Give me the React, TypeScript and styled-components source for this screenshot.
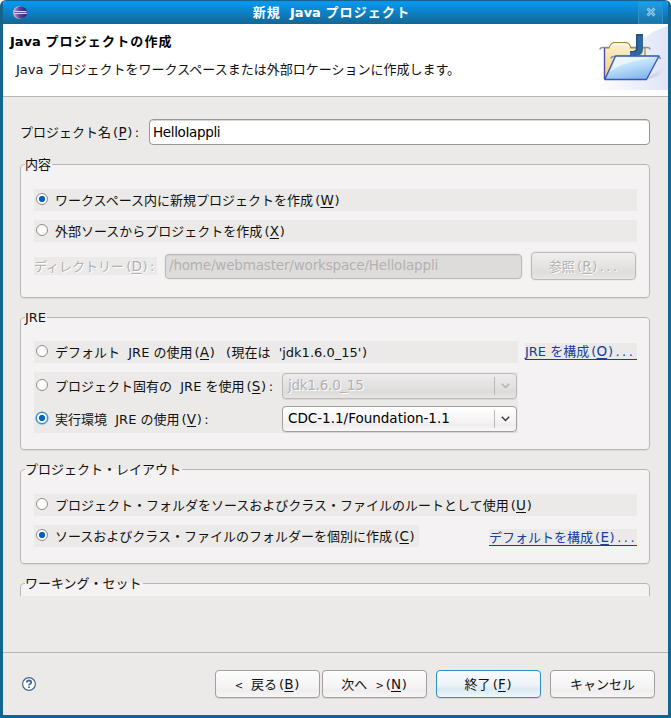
import React from 'react';
import styled, { createGlobalStyle, css } from 'styled-components';

const FACE = '#ebeae8';
const PANEL = '#f4f2f3';
const FRAME = '#15648f';
const LINE = '#b9b7b6';

const GlobalStyle = createGlobalStyle`
  * { box-sizing: border-box; }
  html, body { margin: 0; padding: 0; background: #fff; }
  body {
    font-family: "DejaVu Sans", "Noto Sans CJK JP", sans-serif;
    font-size: 13px;
    line-height: 18px;
    color: #111;
    overflow: hidden;
  }
`;

const Window = styled.div`
  width: 671px;
  height: 718px;
  display: flex;
  flex-direction: column;
  background: ${FACE};
  border: 3px solid ${FRAME};
  border-top: 0;
  border-radius: 6px 6px 0 0;
  overflow: hidden;
`;

const TitleBar = styled.header`
  flex: none;
  height: 24px;
  margin: 0 -3px;
  display: grid;
  grid-template-columns: 26px 1fr 40px;
  align-items: center;
  background: linear-gradient(#0a96e8 1px, #0794e8 3px, #15648f 24px);
  border-top: 1px solid #15648f;
  padding-left: 12px;
`;

const Title = styled.h1`
  margin: 0;
  font-size: 13px;
  line-height: 22px;
  text-align: center;
  font-weight: 700;
  color: #fff;
  padding-right: 6px;
`;

const CloseButton = styled.button`
  width: 25px;
  height: 22px;
  margin-left: 7px;
  padding: 0;
  border: 1px solid #2493d0;
  border-top: 0;
  border-bottom-color: #2080b5;
  background: linear-gradient(#1e9fe8, #1c74a5);
  display: grid;
  place-items: center;
`;

const Banner = styled.section`
  flex: none;
  height: 73px;
  display: flex;
  justify-content: space-between;
  background: #fff;
  border-bottom: 1px solid ${LINE};
`;

const BannerText = styled.div`
  padding: 9px 0 0 7px;
`;

const BannerTitle = styled.h2`
  margin: 0;
  font-size: 13px;
  line-height: 18px;
  font-weight: 700;
  color: #000;
`;

const BannerNote = styled.p`
  margin: 10px 0 0 6px;
`;

const Body = styled.main`
  flex: none;
  height: 499px;
  padding: 22px 18px 0 17px;
  overflow: hidden;
`;

const NameRow = styled.label`
  display: flex;
  align-items: center;
  height: 26px;
`;

const NameLabel = styled.span`
  width: 129px;
  padding-top: 2px;
`;

const Field = styled.input<{ $h: number }>`
  flex: 1;
  min-width: 0;
  height: ${p => p.$h}px;
  padding: 0 3px 1px 3px;
  border: 1px solid #9c9494;
  border-radius: 4px;
  background: #fff;
  box-shadow: inset 0 1px 0 #d8d6d6;
  font: inherit;
  font-size: 13.5px;
  letter-spacing: -0.35px;
  color: #000;
  outline: 0;
  &:disabled {
    background: #dedcdb;
    border-color: #bdbbba;
    color: #b3b1b0;
    letter-spacing: -0.17px;
    padding-bottom: 3px;
    box-shadow: inset 0 1px 0 #d2d0cf, 0 0 0 1px ${FACE};
  }
`;

const Group = styled.fieldset<{ $h: number; $top: number }>`
  min-width: 0;
  height: ${p => p.$h}px;
  margin: ${p => p.$top}px 0 0;
  padding: 0 12px 0 13px;
  border: 1px solid ${LINE};
  border-radius: 4px;
  background: ${PANEL};
  box-shadow: 0 1px 0 #dddbd9;
`;

const Legend = styled.legend`
  height: 19px;
  line-height: 19px;
  margin-left: -9px;
  padding: 0 1px 0 0;
`;

const ClippedGroup = styled.div`
  height: 23px;
  margin-top: 10px;
  overflow: hidden;
`;

const Rows = styled.div<{ $pad: number }>`
  padding-top: ${p => p.$pad}px;
  display: flex;
  flex-direction: column;
  gap: 9px;
`;

const Line = styled.div`
  display: flex;
  justify-content: space-between;
  align-items: flex-start;
`;

const OptionLabel = styled.label<{ $w: number }>`
  width: ${p => p.$w}px;
  height: 22px;
  padding: 2px 0 0 2px;
  display: flex;
  align-items: center;
  gap: 7px;
  white-space: pre;
  background: ${FACE};
`;

const Dot = styled.span<{ $on?: boolean; $focus?: boolean }>`
  flex: none;
  width: 12px;
  height: 12px;
  margin-top: -4px;
  border-radius: 50%;
  border: 1px solid ${p => (p.$focus ? '#1c7fc0' : '#928b8b')};
  background: ${p => (p.$on ? 'radial-gradient(circle, #0560c4 2.7px, #fff 3.6px)' : '#fff')};
  ${p => p.$focus && css`box-shadow: 0 0 0 0.6px #4a9fd2;`}
`;

const Text = styled.span`
  white-space: pre;
`;

const BoldKana = styled.span`
  letter-spacing: 1.15px;
`;

const Accel = styled.span`
  font-size: 13.5px;
  line-height: 1;
  text-decoration: underline;
  text-underline-offset: 2px;
  text-decoration-thickness: 1px;
`;

const OpenBracket = styled.span`
  padding: 0 0.2px 0 2.1px;
`;

const CloseBracket = styled.span`
  padding: 0 0.9px 0 0.7px;
`;

const Wide = styled.span`
  letter-spacing: 2.5px;
  padding-left: 1.6px;
  margin-right: -1.6px;
`;

const Angle = styled.span`
  display: inline-block;
  width: 8px;
  font-size: 10px;
  line-height: 1;
`;

const DirLabel = styled.span`
  width: 123px;
  height: 18px;
  margin-right: -1px;
  background: ${FACE};
  color: #b3b1b0;
  line-height: 19px;
  text-shadow: 1px 1px 0 #fff;
`;

const DirRow = styled.div`
  display: flex;
  align-items: center;
  gap: 9px;
  height: 28px;
  margin-top: 1px;
  padding-right: 1px;
`;

const Button = styled.button<{ $primary?: boolean }>`
  flex: none;
  width: 105px;
  height: 28px;
  padding: 1px 0 0;
  font: inherit;
  white-space: pre;
  color: #111;
  border: 1px solid ${p => (p.$primary ? '#2d8fc4' : '#a39d9d')};
  border-radius: 4px;
  background: ${p => (p.$primary
    ? 'linear-gradient(#f8fbfd, #edf3f7 55%, #dce9f0 70%, #eef8fd)'
    : 'linear-gradient(#fdfdfd, #f5f3f4 60%, #efedee 75%, #f7f5f6)')};
  box-shadow: 0 1px 0 #d8d6d5, inset 0 1px 0 #fff;
  &:disabled {
    color: #b3b1b0;
    text-shadow: 1px 1px 0 #fff;
    border-color: #bdbbba;
    background: linear-gradient(#f0eeee, #e4e2e1 55%, #dfdddc 75%, #e9e7e6);
    box-shadow: 0 0 0 1px ${FACE};
  }
`;

const RuntimeBlock = styled.div`
  width: 484px;
  height: 61px;
  display: grid;
  grid-template-columns: 248px 235px;
  grid-template-rows: 26px 26px;
  row-gap: 7px;
  padding-top: 1px;
  align-items: center;
  background: ${FACE};
`;

const Combo = styled.div<{ $off?: boolean }>`
  height: 26px;
  display: flex;
  align-items: center;
  justify-content: space-between;
  padding: 0 6px 2px 5px;
  font-size: 13.5px;
  border: 1px solid ${p => (p.$off ? '#bdbbba' : '#a39d9d')};
  border-radius: 4px;
  color: ${p => (p.$off ? '#b3b1b0' : '#000')};
  ${p => p.$off && css`text-shadow: 1px 1px 0 #fff; letter-spacing: -0.25px;`}
  background: ${p => (p.$off
    ? 'linear-gradient(#edebeb, #e2e0df 60%, #dddbda 75%, #e8e6e5)'
    : 'linear-gradient(#fff, #f5f3f4 60%, #efedee 75%, #faf9f9)')};
  box-shadow: 0 1px 0 #d8d6d5;
`;

const ComboArrow = styled.span<{ $off?: boolean }>`
  height: 18px;
  margin-top: 2px;
  padding-left: 6px;
  border-left: 1px solid #bbb8b8;
  color: ${p => (p.$off ? '#b3b1b0' : '#3c3a3a')};
  display: flex;
  align-items: center;
`;

const Link = styled.a<{ $w: number; $drop: number }>`
  width: ${p => p.$w}px;
  height: 17px;
  margin-top: ${p => p.$drop}px;
  line-height: 18px;
  white-space: pre;
  color: #1540a0;
  background: linear-gradient(#1540a0, #1540a0) 0 100% / 100% 1px no-repeat ${FACE};
`;

const Footer = styled.footer`
  flex: 1;
  margin-top: 56px;
  border-top: 1px solid ${LINE};
  padding: 17px 13px 0 18px;
  display: flex;
  align-items: flex-start;
`;

const HelpIcon = styled.svg`
  margin: 6px auto 0 0;
`;

const ButtonRow = styled.div`
  display: grid;
  grid-template-columns: 107px 114px 114px 105px;
`;

/* Punctuation takes a half-width cell; "&" marks the mnemonic letter. */
const Caption = ({ text }: { text: string }) => (
  <Text>
    {text.split(/(&[A-Z]|\(|\)|[:.]+$|<|>)/).filter(Boolean).map((part, i) => {
      if (part.length === 2 && part[0] === '&') return <Accel key={i}>{part[1]}</Accel>;
      if (part === '(') return <OpenBracket key={i}>(</OpenBracket>;
      if (part === ')') return <CloseBracket key={i}>)</CloseBracket>;
      if (part === '<' || part === '>') return <Angle key={i}>{part}</Angle>;
      if (/^[:.]+$/.test(part)) return <Wide key={i}>{part}</Wide>;
      return part;
    })}
  </Text>
);

const Option = ({ text, w = 603, on, focus }: {
  text: string; w?: number; on?: boolean; focus?: boolean;
}) => (
  <OptionLabel $w={w}>
    <Dot $on={on} $focus={focus} />
    <Caption text={text} />
  </OptionLabel>
);

const Chevron = () => (
  <svg width="9" height="6" viewBox="0 0 9 6" fill="none" stroke="currentColor" strokeWidth="1.5">
    <path d="M0.8 0.8 L4.5 4.5 L8.2 0.8" />
  </svg>
);

const EclipseLogo = () => (
  <svg width="16" height="14" viewBox="0 0 16 14">
    <defs>
      <linearGradient id="moon" x1="0" x2="1">
        <stop offset="0" stopColor="#b895c0" />
        <stop offset="0.35" stopColor="#5c4d96" />
        <stop offset="1" stopColor="#29216a" />
      </linearGradient>
    </defs>
    <ellipse cx="7" cy="6.5" rx="6" ry="6.2" fill="#d9a5b9" />
    <ellipse cx="8.7" cy="6.5" rx="6.3" ry="6" fill="url(#moon)" />
    <path d="M2.5 5.5H14.5M2.3 7.5H14.8" stroke="#dcd6f0" strokeWidth="1" />
    <path d="M2.3 6.5H14.8" stroke="#5d539d" strokeWidth="1" />
  </svg>
);

const FolderArt = () => (
  <svg width="74" height="66" viewBox="0 0 74 66">
    <defs>
      <linearGradient id="sweep" x1="0" x2="1">
        <stop offset="0" stopColor="#fff" />
        <stop offset="1" stopColor="#dfe5f6" />
      </linearGradient>
      <linearGradient id="manila" x1="0" x2="0" y1="0" y2="1">
        <stop offset="0" stopColor="#fdf3cf" />
        <stop offset="1" stopColor="#eecb78" />
      </linearGradient>
      <linearGradient id="glass" x1="0.2" x2="0.7" y1="0" y2="1">
        <stop offset="0" stopColor="#e6f5fe" />
        <stop offset="0.45" stopColor="#bcdffa" />
        <stop offset="1" stopColor="#80b2ec" />
      </linearGradient>
      <linearGradient id="shade" x1="0" x2="1">
        <stop offset="0" stopColor="#a79ca8" />
        <stop offset="1" stopColor="#dfe3f3" />
      </linearGradient>
    </defs>
    <path d="M0 66 C20 55 34 13 74 2 V66Z" fill="url(#sweep)" />
    <path d="M52 55 L68 44 C73 47 66 54 52 55Z" fill="url(#shade)" opacity="0.45" />
    <path d="M6 25.5 Q6 23.5 9 23.5 H53 Q56 23.5 56 25.5" fill="none" stroke="#8f9097" strokeWidth="1.5" />
    <path d="M10.5 55 V24 H15 Q17 18.8 20 18.5 H32 Q35.5 19 37 24 H51 V32 L43 55Z" fill="url(#manila)" stroke="#a98536" strokeWidth="1.2" />
    <path d="M16 23.5 Q18 20.5 20.5 20.3 H31.5 Q34 20.5 35.5 23.5" fill="none" stroke="#fff9df" strokeWidth="1.3" />
    <path d="M10.5 24 V55" stroke="#4d52a7" strokeWidth="1.3" />
    <path d="M42 10 H49 V25 Q49 32 42 32 H36 V27 H39 Q42 27 42 24Z" fill="#2f68a0" />
    <path d="M42 10 H49 V12 H43.5 V25 Q43.5 28 40 28 H36 V27 H39 Q42 27 42 24Z" fill="#245383" />
    <path d="M17 34.5 Q17 32.5 20 32.5 H63 Q66 32.5 66.5 35" fill="none" stroke="#8f9097" strokeWidth="1.5" />
    <path d="M21.5 32 H65 L52.5 55.5 H10.8Z" fill="url(#glass)" stroke="#3a57b5" strokeWidth="1.4" strokeLinejoin="round" />
    <path d="M22.5 33.5 H61 Q29 37 16 48Z" fill="#f0faff" opacity="0.75" />
  </svg>
);

export default function App() {
  return (
    <>
      <GlobalStyle />
      <Window>
        <TitleBar>
          <EclipseLogo />
          <Title>
            <Text><BoldKana>新規</BoldKana>  Java <BoldKana>プロジェクト</BoldKana></Text>
          </Title>
          <CloseButton aria-label="閉じる">
            <svg width="10" height="10" viewBox="0 0 10 10" fill="none">
              <path d="M1.5 1.5L8.5 8.5M8.5 1.5L1.5 8.5" stroke="#8ac7e8" strokeWidth="3" />
              <path d="M2 2L8 8M8 2L2 8" stroke="#5aa6d0" strokeWidth="1" />
            </svg>
          </CloseButton>
        </TitleBar>

        <Banner>
          <BannerText>
            <BannerTitle><Text>Java <BoldKana>プロジェクトの作成</BoldKana></Text></BannerTitle>
            <BannerNote><Text>Java プロジェクトをワークスペースまたは外部ロケーションに作成します。</Text></BannerNote>
          </BannerText>
          <FolderArt />
        </Banner>

        <Body>
          <NameRow>
            <NameLabel><Caption text="プロジェクト名(&P):" /></NameLabel>
            <Field $h={26} defaultValue="HelloIappli" />
          </NameRow>

          <Group $h={143} $top={10}>
            <Legend>内容</Legend>
            <Rows $pad={15}>
              <Option on text="ワークスペース内に新規プロジェクトを作成(&W)" />
              <Option text="外部ソースからプロジェクトを作成(&X)" />
              <DirRow>
                <DirLabel><Caption text="ディレクトリー(&D):" /></DirLabel>
                <Field $h={25} disabled defaultValue="/home/webmaster/workspace/HelloIappli" />
                <Button disabled><Caption text="参照(&R)..." /></Button>
              </DirRow>
            </Rows>
          </Group>

          <Group $h={142} $top={10}>
            <Legend>JRE</Legend>
            <Rows $pad={14}>
              <Line>
                <Option w={484} text="デフォルト  JRE の使用(&A)  (現在は  'jdk1.6.0_15')" />
                <Link $w={112} $drop={2}><Caption text="JRE を構成(&O)..." /></Link>
              </Line>
              <RuntimeBlock>
                <Option w={248} text="プロジェクト固有の  JRE を使用(&S):" />
                <Combo $off>jdk1.6.0_15<ComboArrow $off><Chevron /></ComboArrow></Combo>
                <Option w={248} on focus text="実行環境  JRE の使用(&V):" />
                <Combo>CDC-1.1/Foundation-1.1<ComboArrow><Chevron /></ComboArrow></Combo>
              </RuntimeBlock>
            </Rows>
          </Group>

          <Group $h={104} $top={10}>
            <Legend>プロジェクト・レイアウト</Legend>
            <Rows $pad={15}>
              <Option text="プロジェクト・フォルダをソースおよびクラス・ファイルのルートとして使用(&U)" />
              <Line>
                <Option w={385} on text="ソースおよびクラス・ファイルのフォルダーを個別に作成(&C)" />
                <Link $w={148} $drop={4}><Caption text="デフォルトを構成(&E)..." /></Link>
              </Line>
            </Rows>
          </Group>

          <ClippedGroup>
            <Group $h={60} $top={0}>
              <Legend>ワーキング・セット</Legend>
            </Group>
          </ClippedGroup>
        </Body>

        <Footer>
          <HelpIcon width="16" height="16" viewBox="0 0 16 16" fill="none" stroke="#44658e">
            <circle cx="8" cy="8" r="6.4" fill="#fff" strokeWidth="1.2" />
            <path d="M5.8 6.4Q5.8 4.5 8 4.5T10.2 6.3Q10.2 7.3 9 8Q8 8.5 8 9.5M8 10.6V12" strokeWidth="1.8" />
          </HelpIcon>
          <ButtonRow>
            <Button><Caption text="<  戻る(&B)" /></Button>
            <Button><Caption text="次へ  >(&N)" /></Button>
            <Button $primary><Caption text="終了(&F)" /></Button>
            <Button>キャンセル</Button>
          </ButtonRow>
        </Footer>
      </Window>
    </>
  );
}
